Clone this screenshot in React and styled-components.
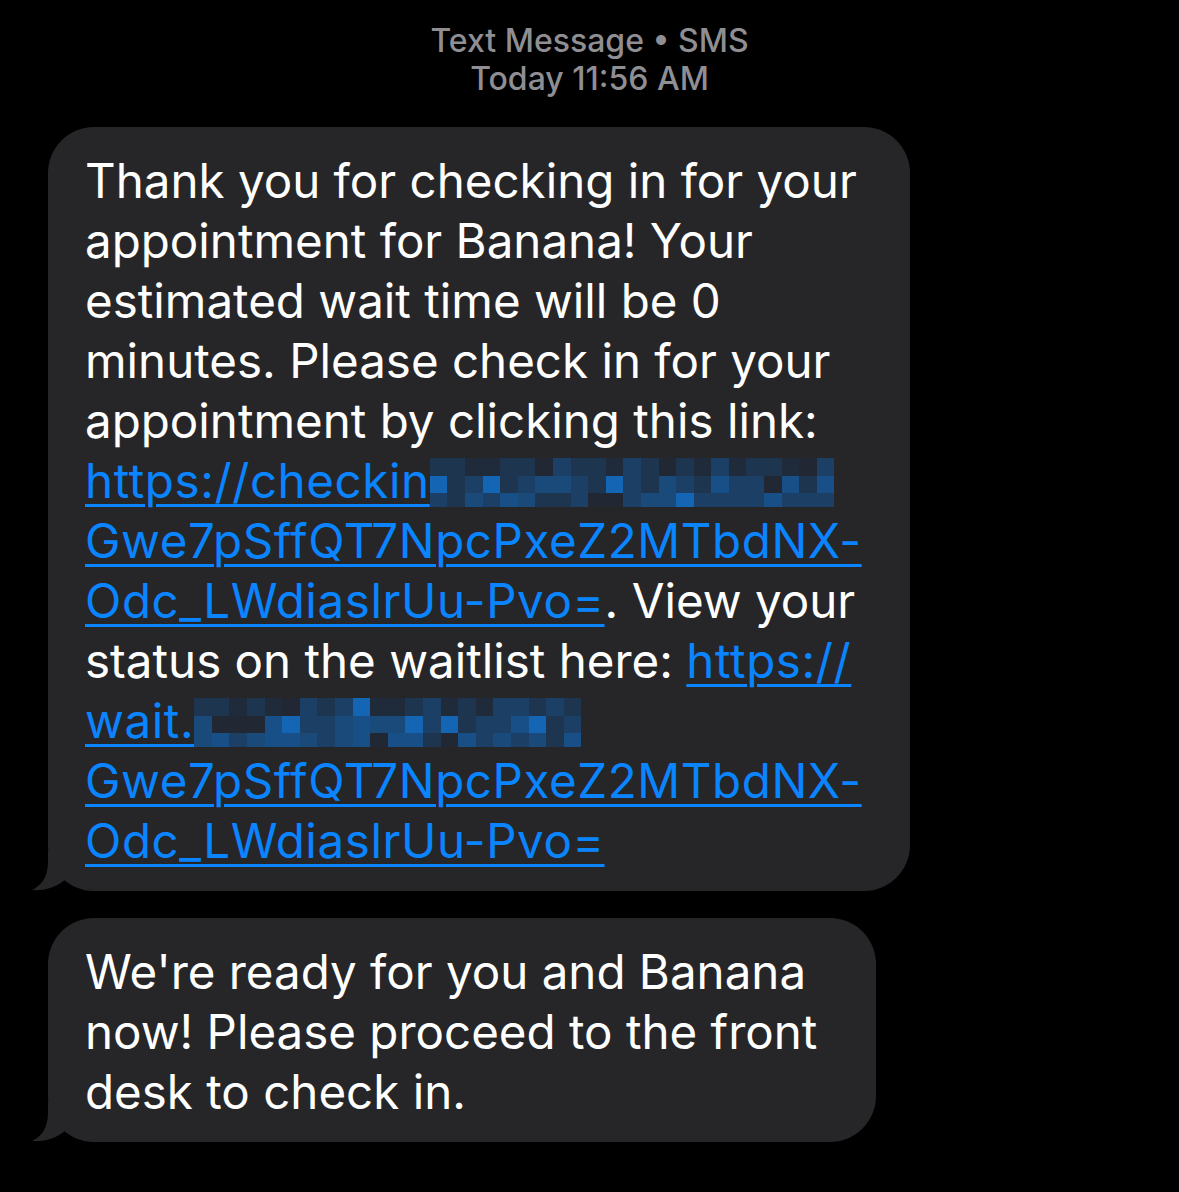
import React from 'react';
import styled, { createGlobalStyle } from 'styled-components';

const GlobalStyle = createGlobalStyle`
    html, body {
        margin: 0;
        padding: 0;
        background: #000;
    }
    body {
        font-family: Inter, "Noto Sans", "Liberation Sans", sans-serif;
        -webkit-font-smoothing: antialiased;
    }
`;

const Page = styled.div`
    width: 1179px;
    height: 1192px;
    background: #000;
    display: flex;
    flex-direction: column;
    padding-top: 22px;
    box-sizing: border-box;
    overflow: hidden;
`;

const Header = styled.div`
    display: flex;
    flex-direction: column;
    align-items: center;
    color: #8e8e93;
    font-size: 32px;
    font-weight: 500;
    line-height: 38px;
`;

const Thread = styled.div`
    display: flex;
    flex-direction: column;
    gap: 27px;
    padding-left: 48px;
    margin-top: 29px;
`;

const Bubble = styled.div`
    position: relative;
    width: ${p => p.width}px;
    box-sizing: border-box;
    background: #262628;
    border-radius: 46px;
    padding: 24px 20px 20px 37px;
    color: #fff;
    font-size: 47.5px;
    line-height: 60px;
`;

const Line = styled.div`
    position: relative;
    height: 60px;
    white-space: nowrap;
`;

const Link = styled.span`
    color: #0a84ff;
    letter-spacing: 0.6px;
    text-decoration: underline;
    text-decoration-thickness: 3px;
    text-underline-offset: 6px;
`;

const Tail = styled.svg`
    position: absolute;
    left: -16px;
    bottom: 0;
    width: 80px;
    height: 40px;
`;

const Pixels = styled.span`
    display: inline-grid;
    grid-template-columns: repeat(${p => p.cols}, 17.6px);
    grid-auto-rows: 17.5px;
    vertical-align: top;
    margin-top: 7px;
    height: 49px;
    overflow: hidden;
`;

const Cell = styled.span`
    display: block;
`;

const palette = ['#1f2a3a', '#1e3550', '#1c3f66', '#1a4a7a', '#184f86', '#1565b5', '#212833'];

function Mosaic({ cols, seed }) {
    const cells = [];
    let s = seed;
    for (let i = 0; i < cols * 3; i++) {
        s = (s * 9301 + 49297) % 233280;
        const r = s / 233280;
        const row = Math.floor(i / cols);
        let idx;
        if (r > 0.94) idx = 5;
        else if (row === 0) idx = Math.floor(r * 3);
        else idx = 1 + Math.floor(r * 4);
        if (r < 0.1) idx = 6;
        cells.push(<Cell key={i} style={{ background: palette[idx] }} />);
    }
    return <Pixels cols={cols}>{cells}</Pixels>;
}

function BubbleTail() {
    return (
        <Tail viewBox="0 0 80 40">
            <path d="M16,0 L16,10 C16,26 10,34 0,39 C13,40 25,36 34,28 C46,37 60,40 80,40 L80,0 Z" fill="#262628" />
        </Tail>
    );
}

function App() {
    return (
        <Page>
            <GlobalStyle />
            <Header>
                <div>Text Message • SMS</div>
                <div>Today 11:56 AM</div>
            </Header>
            <Thread>
                <Bubble width={862}>
                    <BubbleTail />
                    <Line>Thank you for checking in for your</Line>
                    <Line>appointment for Banana! Your</Line>
                    <Line>estimated wait time will be 0</Line>
                    <Line>minutes. Please check in for your</Line>
                    <Line>appointment by clicking this link:</Line>
                    <Line><Link>https://checkin</Link><Mosaic cols={23} seed={7} /></Line>
                    <Line><Link>Gwe7pSffQT7NpcPxeZ2MTbdNX-</Link></Line>
                    <Line><Link>Odc_LWdiaslrUu-Pvo=</Link>. View your</Line>
                    <Line>status on the waitlist here: <Link>https://</Link></Line>
                    <Line><Link>wait.</Link><Mosaic cols={22} seed={31} /></Line>
                    <Line><Link>Gwe7pSffQT7NpcPxeZ2MTbdNX-</Link></Line>
                    <Line><Link>Odc_LWdiaslrUu-Pvo=</Link></Line>
                </Bubble>
                <Bubble width={828}>
                    <BubbleTail />
                    <Line>We're ready for you and Banana</Line>
                    <Line>now! Please proceed to the front</Line>
                    <Line>desk to check in.</Line>
                </Bubble>
            </Thread>
        </Page>
    );
}

export default App;
